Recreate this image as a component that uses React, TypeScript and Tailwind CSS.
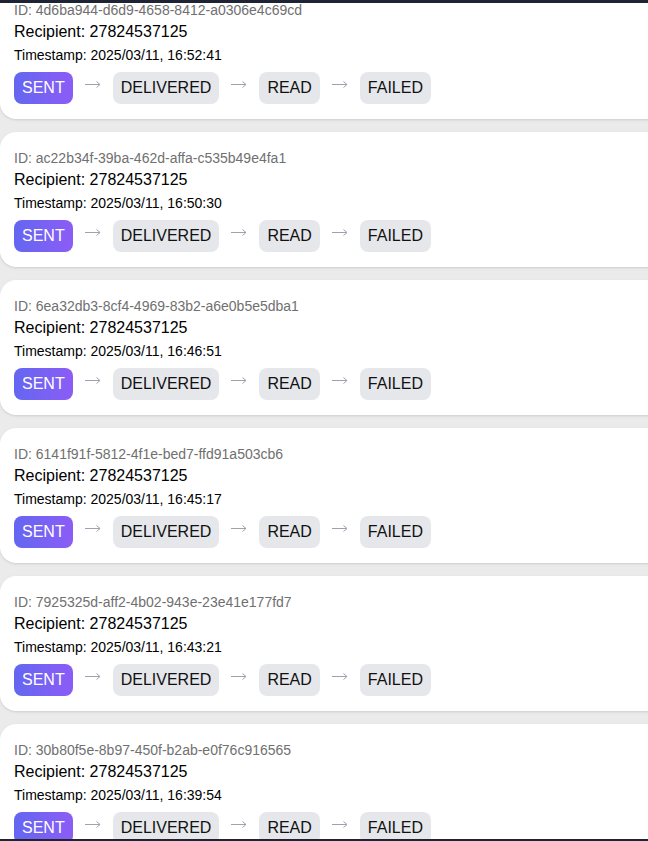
const messages = [
  { id: "4d6ba944-d6d9-4658-8412-a0306e4c69cd", time: "2025/03/11, 16:52:41" },
  { id: "ac22b34f-39ba-462d-affa-c535b49e4fa1", time: "2025/03/11, 16:50:30" },
  { id: "6ea32db3-8cf4-4969-83b2-a6e0b5e5dba1", time: "2025/03/11, 16:46:51" },
  { id: "6141f91f-5812-4f1e-bed7-ffd91a503cb6", time: "2025/03/11, 16:45:17" },
  { id: "7925325d-aff2-4b02-943e-23e41e177fd7", time: "2025/03/11, 16:43:21" },
  { id: "30b80f5e-8b97-450f-b2ab-e0f76c916565", time: "2025/03/11, 16:39:54" },
]

const steps = ["SENT", "DELIVERED", "READ", "FAILED"]

function Arrow() {
  return (
    <svg width="16" height="8" viewBox="0 0 16 8" className="-mt-2" fill="none" stroke="#9ca3af" strokeWidth="1">
      <path d="M0 4.5H15" />
      <path d="M11.5 1.5L15 4.5L11.5 7.5" />
    </svg>
  )
}

function StatusTrack({ current }: { current: string }) {
  return (
    <div className="flex items-center gap-3 mt-[7px]">
      {steps.map((s, i) => (
        <div key={s} className="flex items-center gap-3">
          {i > 0 && <Arrow />}
          <span
            className={
              s === current
                ? "px-2 py-1 rounded-lg text-base leading-6 text-white bg-gradient-to-r from-[#6366f1] to-[#8b5cf6]"
                : "px-2 py-1 rounded-lg text-base leading-6 text-[#111] bg-[#e5e7eb]"
            }
          >
            {s}
          </span>
        </div>
      ))}
    </div>
  )
}

export default function App() {
  return (
    <div className="relative h-[841px] w-full overflow-hidden bg-[#ebebeb] font-['Liberation_Sans',Arial,sans-serif]">
      <div className="absolute top-0 left-0 right-0 h-[3px] bg-[#1e2433] z-10"></div>
      <div className="flex flex-col gap-[13px] -mt-[16px]">
        {messages.map((m) => (
          <div key={m.id} className="w-[700px] bg-white rounded-2xl shadow-sm px-[14px] pt-[16px] pb-[15px]">
            <div className="text-sm leading-5 text-[#707070]">ID: {m.id}</div>
            <div className="text-base leading-6 text-black">Recipient: 27824537125</div>
            <div className="text-sm leading-5 text-black mt-px">Timestamp: {m.time}</div>
            <StatusTrack current="SENT" />
          </div>
        ))}
      </div>
      <div className="absolute bottom-0 left-0 right-0 h-[2px] bg-[#1e2433] z-10"></div>
    </div>
  )
}
